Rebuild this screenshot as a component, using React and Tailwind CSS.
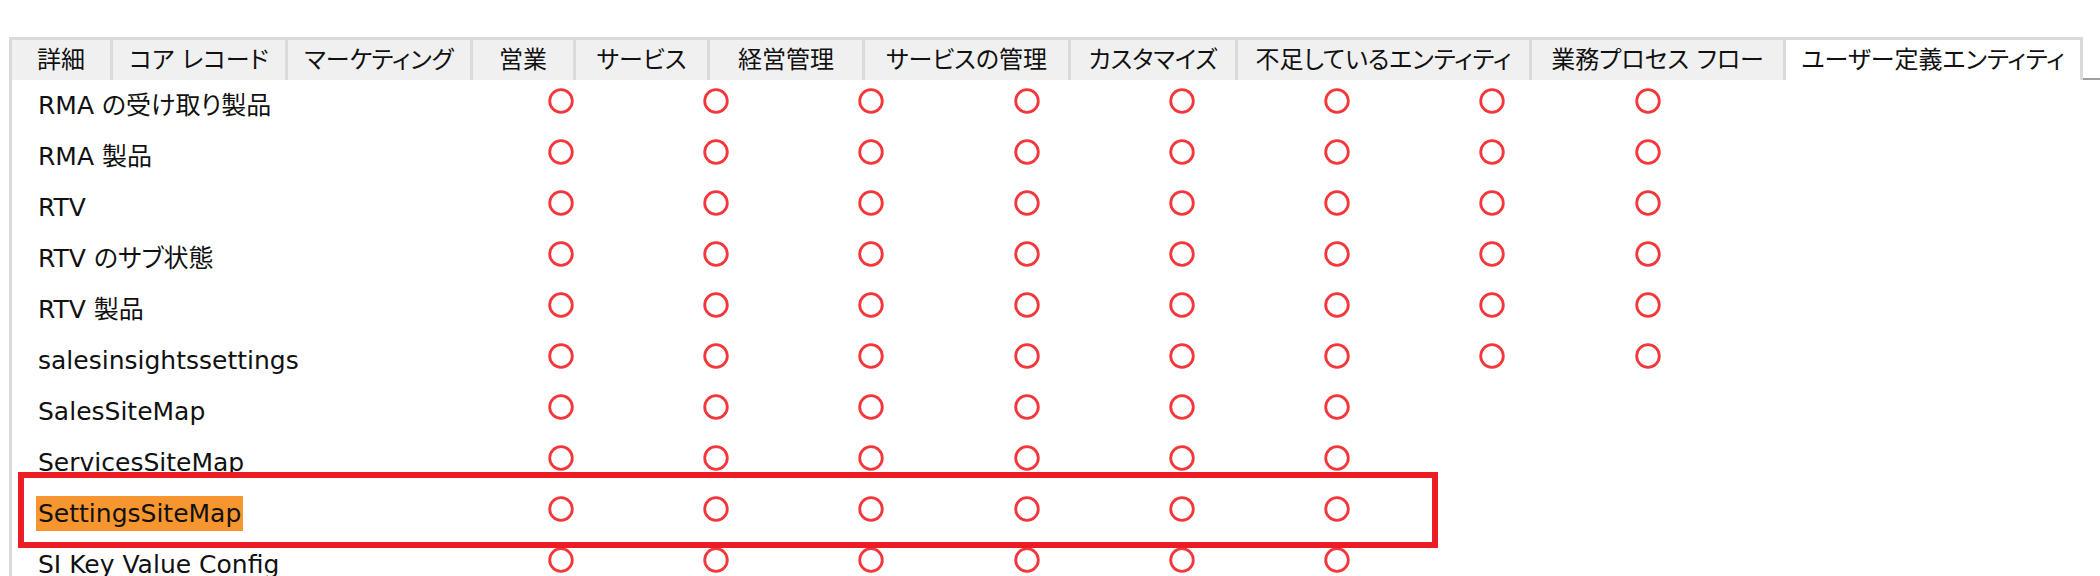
// App.jsx
const tabs = [
  { label: '詳細', w: 'w-[101px]' },
  { label: 'コア レコード', w: 'w-[175px]' },
  { label: 'マーケティング', w: 'w-[185px]' },
  { label: '営業', w: 'w-[103px]' },
  { label: 'サービス', w: 'w-[134px]' },
  { label: '経営管理', w: 'w-[155px]' },
  { label: 'サービスの管理', w: 'w-[206px]' },
  { label: 'カスタマイズ', w: 'w-[167px]' },
  { label: '不足しているエンティティ', w: 'w-[294px]' },
  { label: '業務プロセス フロー', w: 'w-[254px]' },
];

const rows = [
  { name: 'RMA の受け取り製品', count: 8 },
  { name: 'RMA 製品', count: 8 },
  { name: 'RTV', count: 8 },
  { name: 'RTV のサブ状態', count: 8 },
  { name: 'RTV 製品', count: 8 },
  { name: 'salesinsightssettings', count: 8 },
  { name: 'SalesSiteMap', count: 6 },
  { name: 'ServicesSiteMap', count: 6 },
  { name: 'SettingsSiteMap', count: 6, highlight: true },
  { name: 'SI Key Value Config', count: 6 },
];

function Circle() {
  return (
    <svg width="26" height="26" viewBox="0 0 26 26" className="mb-[10px]">
      <circle cx="13" cy="13" r="11.3" fill="none" stroke="#f5363a" strokeWidth="2.8" />
    </svg>
  );
}

function App() {
  return (
    <div className="relative w-[2100px] h-[576px] overflow-hidden bg-white pt-[37px] text-[#111] font-['DejaVu_Sans','Noto_Sans_CJK_JP',sans-serif] [font-feature-settings:'palt'] text-[25px]">
      {/* Tabs */}
      <div className="flex pl-[9px] h-[43px]">
        {tabs.map((t) => (
          <div
            key={t.label}
            className={`${t.w} h-[43px] flex items-center justify-center whitespace-nowrap overflow-hidden bg-[#f0f0f0] border-t-[3px] border-l-[3px] border-[#dadada] text-[24px]`}
          >
            {t.label}
          </div>
        ))}
        <div className="w-[300px] h-[43px] flex items-center justify-center whitespace-nowrap bg-white border-t-[3px] border-x-[3px] border-[#dadada] text-[24px]">
          ユーザー定義エンティティ
        </div>
        <div className="flex-1 border-b-2 border-[#a0a0a0]"></div>
      </div>

      {/* Entity rows */}
      <div className="ml-[9px] border-l-[3px] border-[#dadada] h-[500px]">
        {rows.map((r) => (
          <div key={r.name} className="flex items-center h-[51px]">
            <div className="w-[471px] pl-[26px] whitespace-nowrap">
              {r.highlight ? (
                <span className="inline-block bg-[#f7962f] leading-[35px] px-[2px] -ml-[2px]">{r.name}</span>
              ) : (
                r.name
              )}
            </div>
            {Array.from({ length: r.count }).map((_, i) => (
              <div key={i} className="w-[155.3px] flex justify-center">
                <Circle />
              </div>
            ))}
          </div>
        ))}
      </div>

      {/* annotation box */}
      <div className="absolute left-[18px] top-[472px] w-[1420px] h-[76px] border-[6px] border-[#ec1c24]"></div>
    </div>
  );
}

export default App;
